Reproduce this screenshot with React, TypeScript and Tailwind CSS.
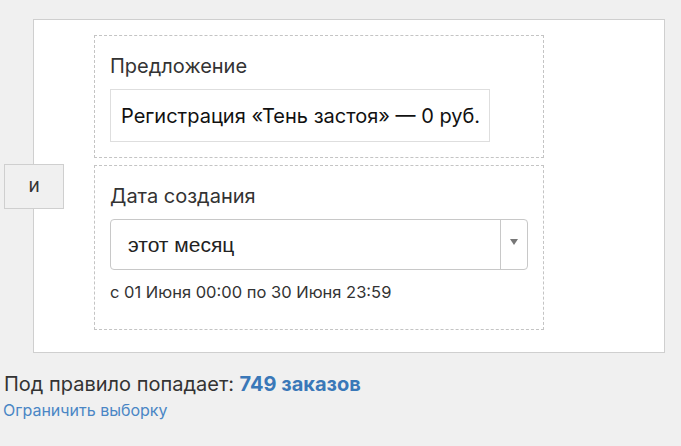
export default function App() {
  return (
    <div
      className="min-h-[446px] w-full bg-[#f0f0f0] pt-[19px] text-[#333]"
      style={{ fontFamily: "Inter, 'Noto Sans', sans-serif" }}
    >
      <div className="relative ml-[33px] w-[632px] border border-[#cfcfcf] bg-white pb-[22px] pl-[60px] pt-[15px]">
        <button
          type="button"
          className="absolute left-[-30px] top-[144px] flex h-[45px] w-[60px] items-center justify-center border border-[#cfcfcf] bg-[#f0f0f0] text-[19px] text-[#333]"
        >
          и
        </button>

        <div className="flex flex-col gap-[7px]">
          <div className="h-[123px] w-[450px] border border-dashed border-[#c4c4c4] px-[15px] pt-[18px]">
            <p className="text-[20px] leading-[24px] text-[#333]">Предложение</p>
            <div className="mt-[11px] flex h-[53px] w-[380px] items-center whitespace-nowrap border border-[#dedede] pl-[10px] text-[20px] text-[#111]">
              Регистрация «Тень застоя» — 0 руб.
            </div>
          </div>

          <div className="h-[165px] w-[450px] border border-dashed border-[#c4c4c4] px-[15px] pt-[18px]">
            <p className="text-[20px] leading-[24px] text-[#333]">Дата создания</p>
            <div className="mt-[11px] flex h-[51px] w-[418px] items-stretch rounded-[4px] border border-[#c8c8c8]">
              <div
                className="flex flex-1 items-center pl-[17px] text-[21px] text-[#222]"
                style={{ fontFamily: "'Liberation Sans', Arial, sans-serif" }}
              >
                этот месяц
              </div>
              <div className="flex w-[27px] items-center justify-center border-l border-[#c8c8c8]">
                <svg width="8" height="6" viewBox="0 0 8 6" className="mb-[5px]">
                  <path d="M0 0 H8 L4 6 Z" fill="#777" />
                </svg>
              </div>
            </div>
            <p className="mt-[12px] text-[16.5px] leading-[20px] text-[#333]">
              с 01 Июня 00:00 по 30 Июня 23:59
            </p>
          </div>
        </div>
      </div>

      <div className="px-[4px] pt-[19px]">
        <p className="text-[20px] leading-[24px] text-[#333]">
          Под правило попадает:{" "}
          <span className="font-bold text-[#3a78b8]">749 заказов</span>
        </p>
        <a href="#" className="-ml-px mt-[3px] block text-[16px] leading-[22px] text-[#4a86c5]">
          Ограничить выборку
        </a>
      </div>
    </div>
  );
}
